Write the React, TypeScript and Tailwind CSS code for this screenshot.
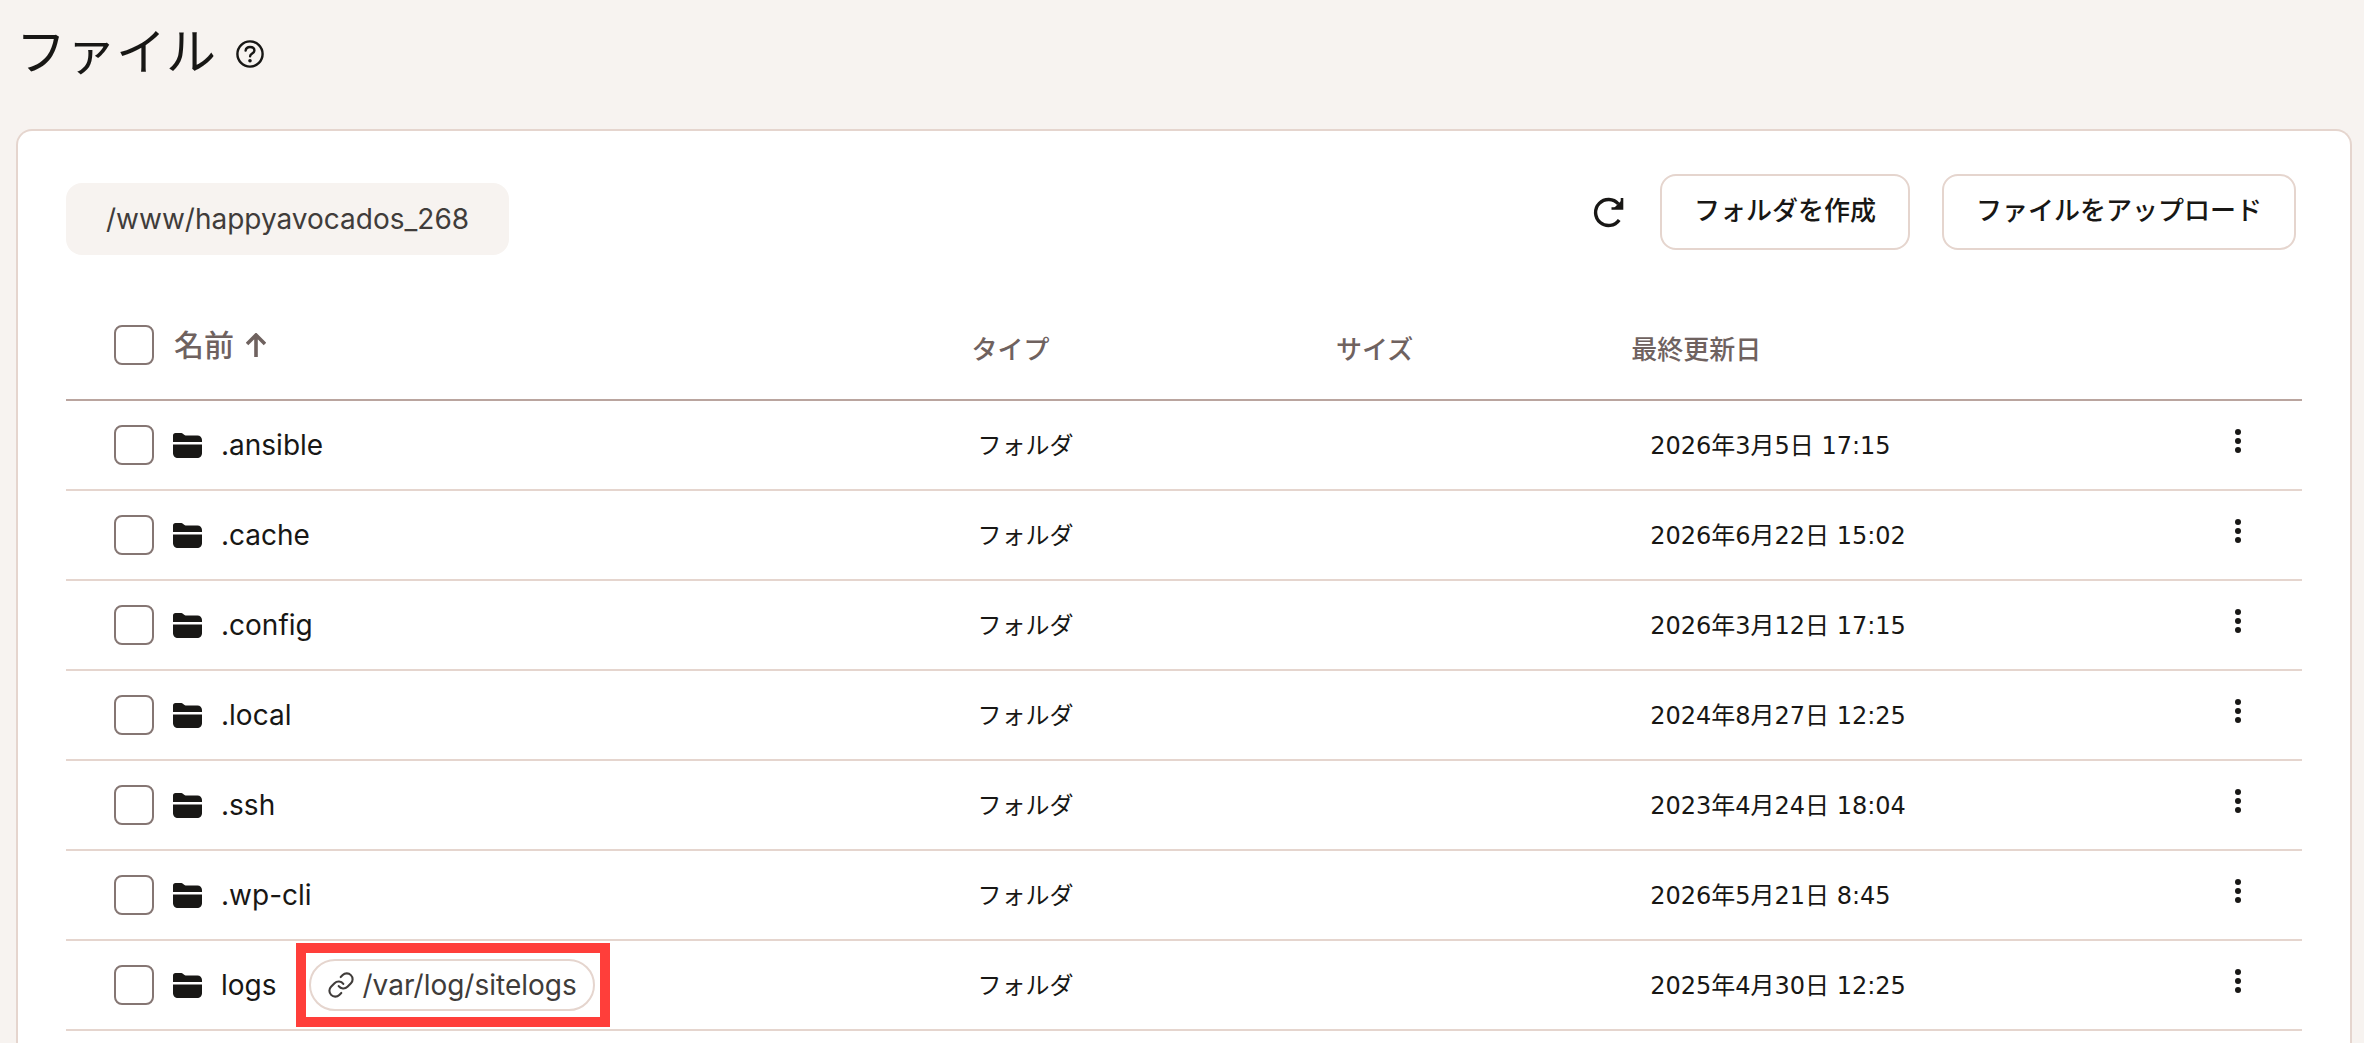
import { Link } from 'lucide-react';

interface FileEntry {
    name: string;
    type: string;
    size?: string;
    modified: string;
    target?: string;
}

const FILES: FileEntry[] = [
    { name: '.ansible', type: 'フォルダ', modified: '2026年3月5日 17:15' },
    { name: '.cache', type: 'フォルダ', modified: '2026年6月22日 15:02' },
    { name: '.config', type: 'フォルダ', modified: '2026年3月12日 17:15' },
    { name: '.local', type: 'フォルダ', modified: '2024年8月27日 12:25' },
    { name: '.ssh', type: 'フォルダ', modified: '2023年4月24日 18:04' },
    { name: '.wp-cli', type: 'フォルダ', modified: '2026年5月21日 8:45' },
    { name: 'logs', type: 'フォルダ', modified: '2025年4月30日 12:25', target: '/var/log/sitelogs' },
];

function HelpIcon() {
    return (
        <svg viewBox="0 0 28 28" className="h-7 w-7" fill="none" stroke="currentColor" strokeWidth="2.4" strokeLinecap="round">
            <circle cx="14" cy="14" r="12.6" />
            <path d="M9.6 10.6c.3-2.3 2-3.6 4.4-3.6 2.5 0 4.4 1.4 4.4 3.6 0 3-4.3 2.8-4.3 5.6" />
            <circle cx="14" cy="20.8" r="1.8" fill="currentColor" stroke="none" />
        </svg>
    );
}

function RefreshIcon() {
    return (
        <svg viewBox="0 0 32 32" className="h-8 w-8" fill="none" stroke="currentColor" strokeWidth="3.4">
            <path d="M27.2 24A13 13 0 1 1 26.4 8" />
            <path d="M30 2v10.5H19.5" strokeWidth="2.6" />
            <path d="M30 4v8.5h-8.5z" fill="currentColor" stroke="none" />
        </svg>
    );
}

function FolderIcon() {
    return (
        <svg viewBox="0 0 29 25" className="h-[25px] w-[29px] shrink-0" fill="currentColor">
            <path d="M0 9V2.5C0 1 1 0 2.5 0h6C10 0 11 2.5 12.5 2.5h12C27 2.5 29 4.5 29 7v2z" />
            <path d="M0 11.5h29V20c0 3-2 5-5 5H5c-3 0-5-2-5-5z" />
        </svg>
    );
}

function SortUpIcon() {
    return (
        <svg viewBox="0 0 20 24" className="h-6 w-5" fill="none" stroke="currentColor" strokeWidth="3.6">
            <path d="M10 24V2M1 11l9-9 9 9" />
        </svg>
    );
}

function Checkbox({ label }: { label: string }) {
    return (
        <input
            type="checkbox"
            aria-label={label}
            className="h-10 w-10 shrink-0 appearance-none rounded-lg border-2 border-[#857673] bg-white checked:bg-[#857673]"
        />
    );
}

function FileRow({ file }: { file: FileEntry }) {
    return (
        <tr className="h-[90px] border-b-2 border-[#e5d5ce]">
            <td className="pl-12">
                <div className="flex items-center">
                    <Checkbox label={file.name} />
                    <span className="ml-[19px] flex items-center">
                        <FolderIcon />
                        <span className="ml-[19px] text-[28px] leading-10">{file.name}</span>
                    </span>
                    {file.target && (
                        <span className="ml-[19px] -my-px border-10 border-[#ff3e3a] py-1.5 pr-[5px] pl-[3px]">
                            <a
                                href="#"
                                className="flex h-[52px] items-center gap-2 rounded-full border-2 border-[#e5d5ce] px-4 text-[28px] leading-10 text-[#403c3a]"
                            >
                                <Link className="h-7 w-7" strokeWidth={1.8} />
                                {file.target}
                            </a>
                        </span>
                    )}
                </div>
            </td>
            <td className="pt-0.5 pl-1.5 text-2xl">{file.type}</td>
            <td>{file.size}</td>
            <td className="pt-0.5 pl-[19px] font-['DejaVu_Sans','Noto_Sans_CJK_JP',sans-serif] text-2xl">{file.modified}</td>
            <td className="pb-2">
                <button aria-label="操作" className="mx-auto flex h-10 w-10 flex-col items-center justify-center gap-[3px]">
                    <span className="h-1.5 w-1.5 rounded-full bg-current" />
                    <span className="h-1.5 w-1.5 rounded-full bg-current" />
                    <span className="h-1.5 w-1.5 rounded-full bg-current" />
                </button>
            </td>
        </tr>
    );
}

export default function App() {
    return (
        <div className="flex min-h-screen flex-col bg-[#f7f3f0] pr-3 pl-4 font-[Inter,'Noto_Sans_CJK_JP',sans-serif] text-[#181715]">
            <header className="flex h-[129px] items-start gap-5 pt-4">
                <h1 className="text-[50px] leading-[72px]">ファイル</h1>
                <button aria-label="ヘルプ" className="mt-6">
                    <HelpIcon />
                </button>
            </header>

            <main className="flex-1 rounded-t-2xl border-2 border-b-0 border-[#e5d5ce] bg-white px-12">
                {/* Path and actions */}
                <div className="flex items-start justify-between pt-[43px] pr-1.5">
                    <div className="mt-[9px] rounded-2xl bg-[#f7f3f0] px-10 py-4 text-[28px] leading-10 text-[#403c3a]">
                        /www/happyavocados_268
                    </div>
                    <div className="flex items-center gap-8">
                        <button aria-label="再読み込み" className="mr-1">
                            <RefreshIcon />
                        </button>
                        <button className="h-[76px] rounded-2xl border-2 border-[#e5d5ce] px-8 pb-1 text-[26px] font-medium">
                            フォルダを作成
                        </button>
                        <button className="h-[76px] rounded-2xl border-2 border-[#e5d5ce] px-8 pb-1 text-[26px] font-medium">
                            ファイルをアップロード
                        </button>
                    </div>
                </div>

                <table className="mt-[35px] w-full table-fixed border-collapse text-left">
                    <colgroup>
                        <col className="w-[40.5%]" />
                        <col className="w-[16.3%]" />
                        <col className="w-[13.2%]" />
                        <col />
                        <col className="w-32" />
                    </colgroup>
                    <thead>
                        <tr className="h-[110px] border-b-2 border-[#baa59f] text-[26px] text-[#6f625f]">
                            <th className="pl-12 font-medium">
                                <div className="flex items-center">
                                    <Checkbox label="すべて選択" />
                                    <button className="ml-5 flex items-center gap-3 text-[30px] leading-10">
                                        名前
                                        <SortUpIcon />
                                    </button>
                                </div>
                            </th>
                            <th className="pt-2.5 font-medium">タイプ</th>
                            <th className="pt-2.5 font-medium">サイズ</th>
                            <th className="pt-2.5 font-medium">最終更新日</th>
                            <th aria-label="操作" />
                        </tr>
                    </thead>
                    <tbody>
                        {FILES.map((file) => (
                            <FileRow key={file.name} file={file} />
                        ))}
                    </tbody>
                </table>
            </main>
        </div>
    );
}
